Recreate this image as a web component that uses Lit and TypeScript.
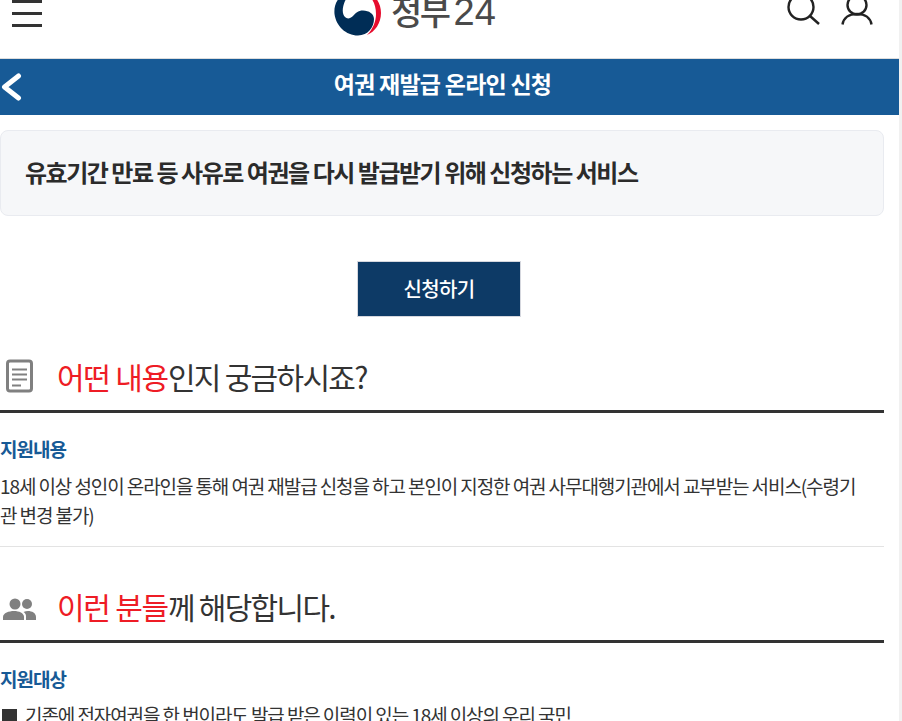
import { LitElement, html, css } from "lit";
import { customElement } from "lit/decorators.js";

@customElement("app-root")
export class AppRoot extends LitElement {
  static styles = css`
    :host { display: flex; width: 902px; height: 721px; overflow: hidden; background: #fff;
      font-family: "Noto Sans CJK KR", "Noto Sans", sans-serif; color: #333; }
    .page { width: 899px; flex: none; }
    .scroll { flex: 1; background: #f1f1f1; }
    .top { height: 58px; overflow: hidden; display: flex; align-items: flex-end; justify-content: space-between; border-bottom: 1px solid #ddd; position: relative; padding: 0 26px 0 12px; }
    .menu { display: flex; flex-direction: column; gap: 9px; width: 30px; margin-bottom: 31px; }
    .menu i { display: block; height: 3px; background: #333; }
    .logo { position: absolute; left: 334px; top: -13px; display: flex; align-items: center; gap: 9px; }
    .logotext { display: flex; align-items: baseline; color: #4a4a4a; gap: 5px; }
    .logotext b { font-size: 34px; line-height: 48px; font-weight: 500; letter-spacing: -2.5px; }
    .logotext span { font-family: "Liberation Sans", sans-serif; font-weight: 400; font-size: 38px; line-height: 48px; letter-spacing: 0; }
    .tools { display: flex; gap: 20px; margin-bottom: 31px; }
    .bar { height: 56px; background: #175a96; display: flex; align-items: center; justify-content: center; position: relative; }
    .bar h1 { margin: 0 0 7px; font-size: 23px; font-weight: 700; color: #fff; letter-spacing: -0.75px; line-height: 1; position: relative; left: -7px; }
    .back { position: absolute; left: 1px; top: 13px; }
    main { width: 884px; }
    .card { margin-top: 15px; height: 86px; box-sizing: border-box; border: 1px solid #e9ebf0; border-radius: 8px; background: #f6f7f9; padding: 0 24px 3px; display: flex; align-items: center; font-size: 24px; font-weight: 700; letter-spacing: -1.48px; color: #2b2b2b; }
    .cta { display: flex; justify-content: center; margin: 45px 0 0 -6px; }
    .cta button { width: 164px; height: 56px; box-sizing: border-box; border: 1px solid #d5d7de; background: #0d3a66; color: #fff; font: 500 20px "Noto Sans CJK KR", sans-serif; letter-spacing: -0.7px; padding: 0 0 2px; }
    .head { display: flex; align-items: center; height: 57px; border-bottom: 3px solid #333; margin-top: 30px; padding-bottom: 6px; }
    .head .ico { width: 57px; flex: none; display: flex; padding-left: 6px; box-sizing: border-box; }
    .head .ico.people { padding-left: 3px; margin-top: 8px; }
    .head h2 { margin: 0; font-size: 30px; font-weight: 400; letter-spacing: -1.7px; line-height: 1; color: #333; }
    .head h2 em { font-style: normal; color: #ee1c25; letter-spacing: -1.25px; }
    h3 { margin: 22px 0 0; font-size: 19px; line-height: 28px; font-weight: 700; color: #175a96; letter-spacing: -1px; }
    .desc { margin: 8px 0 0; font-size: 19px; line-height: 29px; letter-spacing: -1.09px; color: #333; padding: 0 24px 0 0; }
    hr { border: 0; border-top: 1px solid #e3e3e3; margin: 17px 0 0; }
    .second { margin-top: 30px; }
    .li { display: flex; gap: 8px; align-items: flex-start; margin-top: 6px; padding-left: 2px; }
    .li i { display: block; width: 15px; height: 16px; background: #333; margin-top: 10px; flex: none; }
    .li p { margin: 0; font-size: 19px; line-height: 31px; letter-spacing: -1.08px; }
  `;
  render() {
    return html`<div class="page">
      <div class="top">
        <div class="menu"><i></i><i></i><i></i></div>
        <div class="logo">
          <svg width="48" height="48" viewBox="0 0 48 48">
            <path d="M30 3C40 5 47 14 47 25 47 35 41 44 33 47 39 41 42 33 42 26 42 16 38 9 30 3Z" fill="#e60d2e"/>
            <path d="M7 8C1 14 0 20 .5 26 2 38 12 47.500 24 47.500 34 47.500 40 39 40 31 40 26 35 22.500 29 22.500 24 22.500 21.500 25 19 28 16 31 13 31 11 29 8 26 8 20 11 13L14 8Z" fill="#002d56"/>
          </svg>
          <div class="logotext"><b>정부</b><span>24</span></div>
        </div>
        <div class="tools">
          <svg width="34" height="28" viewBox="0 0 34 28" fill="none" stroke="#222" stroke-width="2.4"><circle cx="14" cy="8" r="12.5"/><path d="M23 17l9 8"/></svg>
          <svg width="32" height="28" viewBox="0 0 32 28" fill="none" stroke="#222" stroke-width="2.4"><circle cx="16" cy="6" r="9.5"/><path d="M1.5 25.500C2.500 19 8 15 16 15s13.500 4 14.500 10.500"/></svg>
        </div>
      </div>
      <div class="bar">
        <svg class="back" width="24" height="30" viewBox="0 0 24 30" fill="none" stroke="#fff" stroke-width="5" stroke-linecap="round" stroke-linejoin="round"><path d="M17.500 4L3.500 15 17.500 26"/></svg>
        <h1>여권 재발급 온라인 신청</h1>
      </div>
      <main>
        <div class="card">유효기간 만료 등 사유로 여권을 다시 발급받기 위해 신청하는 서비스</div>
        <div class="cta"><button>신청하기</button></div>
        <div class="head">
          <span class="ico"><svg width="27" height="34" viewBox="0 0 27 34" fill="none"><rect x="1.500" y="2" width="24" height="30" rx="2.500" stroke="#808080" stroke-width="3"/><path d="M6 10.500h15M6 15.500h15M6 20.500h15M6 26.500h9" stroke="#808080" stroke-width="2.200"/></svg></span>
          <h2><em>어떤 내용</em>인지 궁금하시죠?</h2>
        </div>
        <h3>지원내용</h3>
        <p class="desc">18세 이상 성인이 온라인을 통해 여권 재발급 신청을 하고 본인이 지정한 여권 사무대행기관에서 교부받는 서비스(수령기관 변경 불가)</p>
        <hr />
        <div class="head second">
          <span class="ico people"><svg width="33" height="24" viewBox="0 0 33 24" fill="#808080"><circle cx="12" cy="6" r="5.500"/><circle cx="24" cy="6" r="5"/><path d="M0 22v-3c0-4 6-6 11-6s10 2 10 6v3z"/><path d="M23 22v-4c0-2-1-3-2.500-4 1.500-.7 3-1 4.500-1 4 0 8 2 8 6v3z"/></svg></span>
          <h2><em>이런 분들</em>께 해당합니다.</h2>
        </div>
        <h3>지원대상</h3>
        <div class="li"><i></i><p>기존에 전자여권을 한 번이라도 발급 받은 이력이 있는 18세 이상의 우리 국민</p></div>
      </main>
    </div><div class="scroll"></div>`;
  }
}
